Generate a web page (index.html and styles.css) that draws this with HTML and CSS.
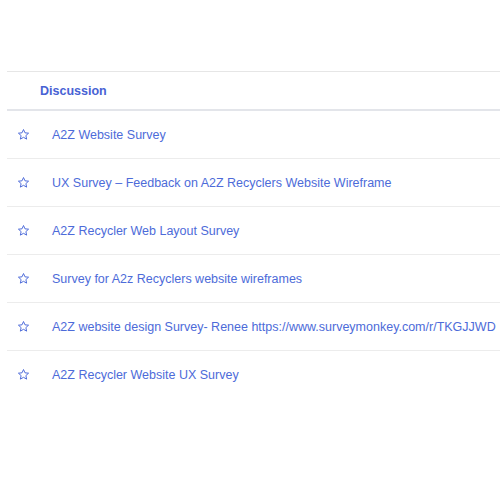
FILE: index.html
```html
<!DOCTYPE html>
<html>
<head>
<meta charset="utf-8">
<link rel="stylesheet" href="styles.css">
</head>
<body>
<div class="list">
  <div class="head"><span class="head-title">Discussion</span></div>
  <div class="row"><svg class="star" viewBox="0 0 24 24"><path d="M12 2.8l2.75 6.1 6.65.65-5 4.45 1.45 6.55L12 17.2l-5.85 3.35 1.45-6.55-5-4.45 6.65-.65z"/></svg><span class="title">A2Z Website Survey</span></div>
  <div class="row"><svg class="star" viewBox="0 0 24 24"><path d="M12 2.8l2.75 6.1 6.65.65-5 4.45 1.45 6.55L12 17.2l-5.85 3.35 1.45-6.55-5-4.45 6.65-.65z"/></svg><span class="title">UX Survey – Feedback on A2Z Recyclers Website Wireframe</span></div>
  <div class="row"><svg class="star" viewBox="0 0 24 24"><path d="M12 2.8l2.75 6.1 6.65.65-5 4.45 1.45 6.55L12 17.2l-5.85 3.35 1.45-6.55-5-4.45 6.65-.65z"/></svg><span class="title">A2Z Recycler Web Layout Survey</span></div>
  <div class="row"><svg class="star" viewBox="0 0 24 24"><path d="M12 2.8l2.75 6.1 6.65.65-5 4.45 1.45 6.55L12 17.2l-5.85 3.35 1.45-6.55-5-4.45 6.65-.65z"/></svg><span class="title">Survey for A2z Recyclers website wireframes</span></div>
  <div class="row"><svg class="star" viewBox="0 0 24 24"><path d="M12 2.8l2.75 6.1 6.65.65-5 4.45 1.45 6.55L12 17.2l-5.85 3.35 1.45-6.55-5-4.45 6.65-.65z"/></svg><span class="title">A2Z website design Survey- Renee https://www.surveymonkey.com/r/TKGJJWD</span></div>
  <div class="row last"><svg class="star" viewBox="0 0 24 24"><path d="M12 2.8l2.75 6.1 6.65.65-5 4.45 1.45 6.55L12 17.2l-5.85 3.35 1.45-6.55-5-4.45 6.65-.65z"/></svg><span class="title">A2Z Recycler Website UX Survey</span></div>
</div>
</body>
</html>
```
FILE: styles.css
```css
html, body {
  margin: 0;
  padding: 0;
  background: #ffffff;
}
body {
  padding: 71px 0 0 7px;
  font-family: "Liberation Sans", Arial, sans-serif;
  font-size: 12.5px;
  color: #4d6bd9;
}
.list {
  overflow: hidden;
}
.head {
  height: 37px;
  border-top: 1px solid #e6e6e6;
  border-bottom: 2px solid #e3e5ea;
  display: flex;
  align-items: center;
  padding-left: 33px;
}
.head-title {
  font-weight: bold;
  color: #4762d4;
}
.row {
  height: 47px;
  border-bottom: 1px solid #ececec;
  display: flex;
  align-items: center;
  white-space: nowrap;
}
.row.last {
  border-bottom: none;
}
.star {
  width: 13px;
  height: 13px;
  margin-left: 10px;
  margin-right: 22px;
  fill: none;
  stroke: #4d6bd9;
  stroke-width: 1.8;
  stroke-linejoin: round;
  flex: none;
}
.title {
  color: #4d6bd9;
}
```
